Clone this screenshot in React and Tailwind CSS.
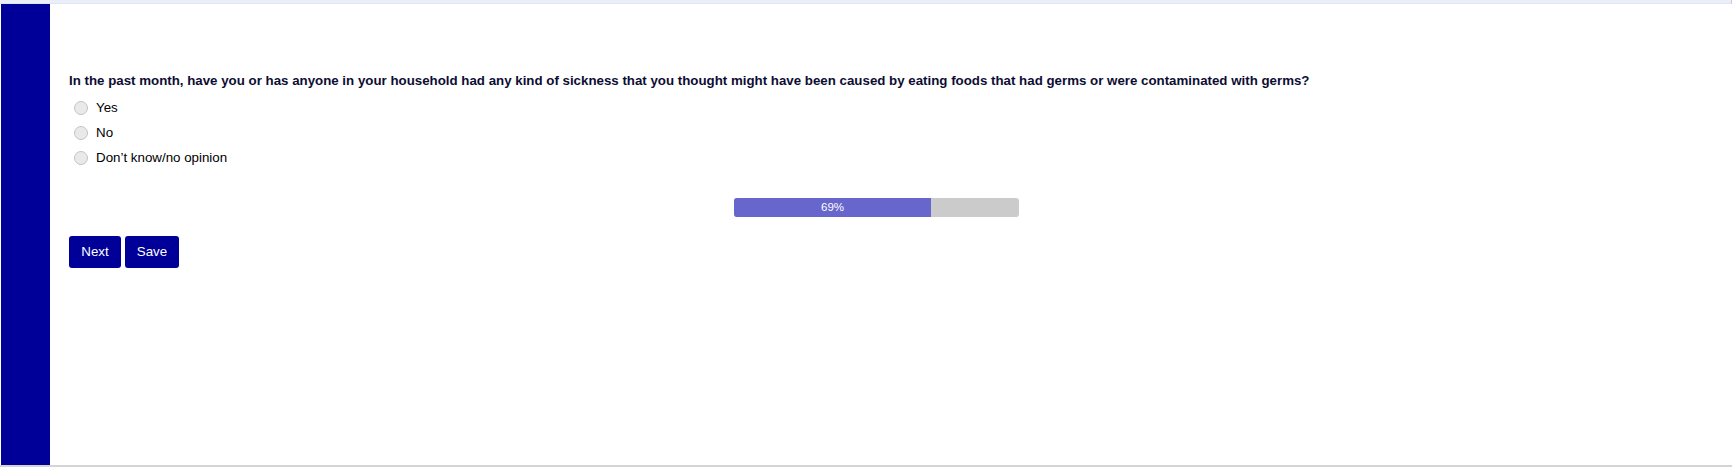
export default function App() {
  const options = ["Yes", "No", "Don\u2019t know/no opinion"];
  return (
    <div className="w-[1732px] h-[467px] flex flex-col bg-white font-['Liberation_Sans',Arial,sans-serif]">
      <div className="h-[4px] bg-[#e9eef9] border-b border-[#dfe6f3] border-r border-r-[#c8c8c8]" />
      <div className="flex flex-1 border-b-2 border-[#d4d4d4]">
        <div className="w-[49px] ml-px bg-[#000099]" />
        <div className="flex-1 pl-[19px] pt-[69px]">
          <p className="text-[13.3px] leading-[15px] font-bold text-[#0d0d33]">
            In the past month, have you or has anyone in your household had any kind of sickness that you thought might have been caused by eating foods that had germs or were contaminated with germs?
          </p>
          <div className="mt-[7px] flex flex-col">
            {options.map((o) => (
              <label key={o} className="h-[25px] flex items-center text-[13.33px] text-black">
                <span className="ml-[5px] w-[14px] h-[14px] rounded-full bg-[#e9e9e9] border border-[#c4c4c4]" />
                <span className="ml-[8px]">{o}</span>
              </label>
            ))}
          </div>
          <div className="mt-[28px] ml-[665px] w-[285px] h-[19px] rounded-[3px] bg-[#cbcbcb] flex overflow-hidden">
            <div className="w-[197px] h-full bg-[#6666cc] flex items-center justify-center text-white text-[11.5px]">
              69%
            </div>
          </div>
          <div className="mt-[19px] flex gap-[4px]">
            <button className="w-[52px] h-[32px] rounded-[3px] bg-[#000099] text-white text-[13.33px]">Next</button>
            <button className="w-[54px] h-[32px] rounded-[3px] bg-[#000099] text-white text-[13.33px]">Save</button>
          </div>
        </div>
      </div>
    </div>
  );
}
